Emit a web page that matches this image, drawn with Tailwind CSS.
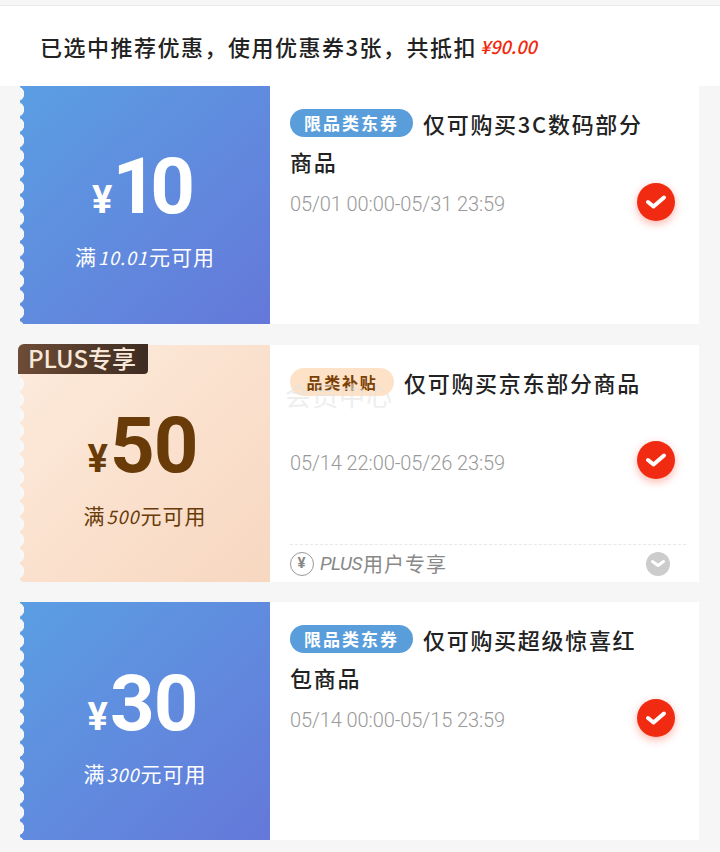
<!DOCTYPE html>
<html lang="zh">
<head>
    <meta charset="UTF-8">
    <title>优惠券</title>
    <script src="https://cdn.jsdelivr.net/npm/@tailwindcss/browser@4"></script>
</head>
<body class="bg-[#f6f6f6] font-['Noto_Sans_CJK_SC',sans-serif]">
<div class="w-[720px] h-[852px] overflow-hidden">
    <div class="h-[6px] border-b border-[#ebebeb]"></div>

    <!-- summary -->
    <div class="h-[80px] bg-white pl-[40px] flex items-center text-[22px] leading-none text-[#222] font-medium tracking-[1.5px]">
        已选中推荐优惠，使用优惠券3张，共抵扣<span class="ml-[3px] text-[#f2270c] text-[18px] tracking-normal italic">¥90.00</span>
    </div>

    <div class="pl-[20px] w-[699px]">
        <!-- coupon 1 -->
        <div class="flex h-[238px] bg-white">
            <div class="relative w-[250px] shrink-0 bg-gradient-to-br from-[#5a9ee3] to-[#6478d9] text-white flex flex-col items-center">
                <div class="absolute left-0 top-0 bottom-0 w-[6px] bg-[radial-gradient(circle_at_-3px_50%,#f6f6f6_7px,transparent_7.5px)] bg-[length:6px_15.6px]"></div>
                <div class="flex items-baseline mt-[62px] h-[78px] leading-none pr-[10px]">
                    <span class="text-[38px] font-bold font-['Roboto']">¥</span>
                    <span class="text-[78px] font-bold font-['Roboto'] tracking-[-7px]">10</span>
                </div>
                <div class="mt-[20px] text-[21px] leading-none tracking-[1px]">满<span class="italic text-[18px] mx-[1px]">10.01</span>元可用</div>
            </div>
            <div class="relative flex-1 pl-[20px] pr-[48px] pt-[18px]">
                <p class="text-[22px] leading-[38px] text-[#222] font-medium tracking-[1.7px]"><span class="inline-block align-[3px] h-[28px] w-[123px] mr-[10px] rounded-full bg-[#5a9ddb] text-white text-[17px] leading-[28px] text-center font-bold tracking-[2px]">限品类东券</span>仅可购买3C数码部分商品</p>
                <p class="mt-[12px] text-[#999] text-[20px] leading-[24px] font-['Roboto'] font-light tracking-[-0.1px]">05/01 00:00-05/31 23:59</p>
                <div class="absolute right-[24px] top-[97px] w-[38px] h-[38px] rounded-full bg-[#f02b12] shadow-[0_3px_8px_rgba(240,43,18,0.35)] flex items-center justify-center">
                    <svg width="22" height="18" viewBox="0 0 22 18" fill="none"><path d="M3 9l5.500 4.500L19 4.500" stroke="#fff" stroke-width="4" stroke-linecap="round" stroke-linejoin="round"/></svg>
                </div>
            </div>
        </div>

        <!-- coupon 2 -->
        <div class="flex h-[237px] bg-white mt-[21px]">
            <div class="relative w-[250px] shrink-0 bg-gradient-to-br from-[#fdebdc] to-[#f7d7c0] text-[#683b08] flex flex-col items-center">
                <div class="absolute left-0 top-0 bottom-0 w-[6px] bg-[radial-gradient(circle_at_-3px_50%,#f8f8f8_7px,transparent_7.5px)] bg-[length:6px_15.6px]"></div>
                <div class="absolute left-[-2px] top-[-1px] w-[130px] h-[30px] rounded-br-[4px] rounded-tl-[6px] bg-gradient-to-r from-[#6e4c36] to-[#3e2c22] text-[#f8e8da] text-[24px] leading-[28px] pl-[10px] font-medium">PLUS专享</div>
                <div class="flex items-baseline mt-[62px] h-[78px] leading-none pr-[5px]">
                    <span class="text-[38px] font-bold font-['Roboto'] mr-[2px]">¥</span>
                    <span class="text-[78px] font-bold font-['Roboto'] tracking-[-1px]">50</span>
                </div>
                <div class="mt-[20px] text-[21px] leading-none tracking-[1px]">满<span class="italic text-[18px] mx-[1px]">500</span>元可用</div>
            </div>
            <div class="relative flex-1 pl-[20px] pr-[48px] pt-[18px]">
                <p class="text-[22px] leading-[38px] text-[#222] font-medium tracking-[1.7px]"><span class="inline-block align-[3px] h-[28px] w-[104px] mr-[10px] rounded-full bg-[#fde2c8] text-[#7a3f05] text-[16px] leading-[28px] text-center font-bold">品类补贴</span>仅可购买京东部分商品</p>
                <p class="mt-[50px] text-[#999] text-[20px] leading-[24px] font-['Roboto'] font-light tracking-[-0.1px]">05/14 22:00-05/26 23:59</p>
                <div class="absolute left-[15px] top-[36px] w-[110px] text-[26px] leading-[28px] text-[#e4e4e4]/60 tracking-[1px]">会员中心</div>
                <div class="absolute right-[24px] top-[96px] w-[38px] h-[38px] rounded-full bg-[#f02b12] shadow-[0_3px_8px_rgba(240,43,18,0.35)] flex items-center justify-center">
                    <svg width="22" height="18" viewBox="0 0 22 18" fill="none"><path d="M3 9l5.500 4.500L19 4.500" stroke="#fff" stroke-width="4" stroke-linecap="round" stroke-linejoin="round"/></svg>
                </div>
                <div class="absolute left-[20px] right-[13px] bottom-0 h-[38px] border-t border-dashed border-[#e8e8e8] flex items-center justify-between pr-[16px]">
                    <div class="flex items-center text-[#888] text-[20px] leading-none tracking-[1px]">
                        <span class="w-[24px] h-[24px] mr-[6px] rounded-full border border-[#999] flex items-center justify-center text-[15px] font-bold font-['Roboto'] text-[#888]">¥</span>
                        <span class="italic text-[19px] font-['Roboto'] tracking-[-0.5px] mr-[1px]">PLUS</span>用户专享
                    </div>
                    <div class="w-[24px] h-[24px] rounded-full bg-[#cccccc] flex items-center justify-center">
                        <svg width="16" height="10" viewBox="0 0 16 10" fill="none"><path d="M2.500 2.500L8 6.500l5.500-4" stroke="#fff" stroke-width="3" stroke-linecap="round" stroke-linejoin="round"/></svg>
                    </div>
                </div>
            </div>
        </div>

        <!-- coupon 3 -->
        <div class="flex h-[238px] bg-white mt-[20px]">
            <div class="relative w-[250px] shrink-0 bg-gradient-to-br from-[#5a9ee3] to-[#6478d9] text-white flex flex-col items-center">
                <div class="absolute left-0 top-0 bottom-0 w-[6px] bg-[radial-gradient(circle_at_-3px_50%,#f6f6f6_7px,transparent_7.5px)] bg-[length:6px_15.6px]"></div>
                <div class="flex items-baseline mt-[63px] h-[78px] leading-none pr-[5px]">
                    <span class="text-[38px] font-bold font-['Roboto'] mr-[2px]">¥</span>
                    <span class="text-[78px] font-bold font-['Roboto'] tracking-[-1px]">30</span>
                </div>
                <div class="mt-[20px] text-[21px] leading-none tracking-[1px]">满<span class="italic text-[18px] mx-[1px]">300</span>元可用</div>
            </div>
            <div class="relative flex-1 pl-[20px] pr-[48px] pt-[18px]">
                <p class="text-[22px] leading-[38px] text-[#222] font-medium tracking-[1.7px]"><span class="inline-block align-[3px] h-[28px] w-[123px] mr-[10px] rounded-full bg-[#5a9ddb] text-white text-[17px] leading-[28px] text-center font-bold tracking-[2px]">限品类东券</span>仅可购买超级惊喜红包商品</p>
                <p class="mt-[12px] text-[#999] text-[20px] leading-[24px] font-['Roboto'] font-light tracking-[-0.1px]">05/14 00:00-05/15 23:59</p>
                <div class="absolute right-[24px] top-[97px] w-[38px] h-[38px] rounded-full bg-[#f02b12] shadow-[0_3px_8px_rgba(240,43,18,0.35)] flex items-center justify-center">
                    <svg width="22" height="18" viewBox="0 0 22 18" fill="none"><path d="M3 9l5.500 4.500L19 4.500" stroke="#fff" stroke-width="4" stroke-linecap="round" stroke-linejoin="round"/></svg>
                </div>
            </div>
        </div>
    </div>
</div>
</body>
</html>
